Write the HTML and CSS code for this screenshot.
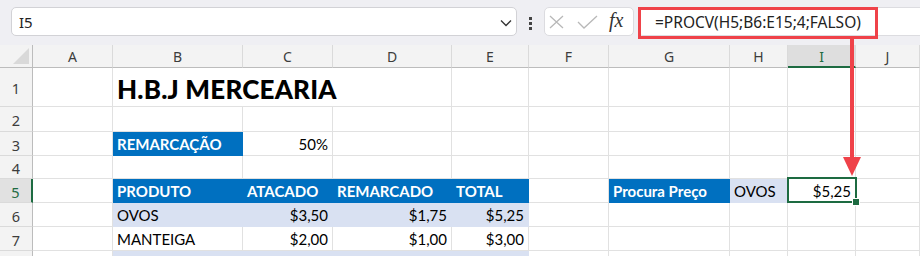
FILE: index.html
```html
<!DOCTYPE html>
<html>

<head>
	<title>H.B.J Mercearia</title>
	<link rel="stylesheet" href="styles.css">
</head>

<body>
	<div class="toolbar">
		<div class="name-box">
			<span>I5</span>
			<svg class="chevron" width="12" height="8" viewBox="0 0 12 8"><path d="M1 1.5 L6 6.5 L11 1.5" fill="none" stroke="#333" stroke-width="1.3"/></svg>
		</div>
		<div class="grip"><i></i><i></i><i></i></div>
		<div class="fx-buttons">
			<svg width="20" height="14" viewBox="0 0 20 14"><path d="M3 1 L16 13 M16 1 L3 13" stroke="#b8b8b8" stroke-width="1.3" fill="none"/></svg>
			<svg width="22" height="14" viewBox="0 0 22 14"><path d="M1 7 L7 13 L20 1" stroke="#b8b8b8" stroke-width="1.3" fill="none"/></svg>
			<span class="fx">fx</span>
		</div>
		<div class="formula">
			<span>=PROCV(H5;B6:E15;4;FALSO)</span>
			<div class="callout"></div>
		</div>
	</div>

	<div class="sheet">
		<!-- column headers -->
		<div class="corner"><svg width="16" height="16" viewBox="0 0 16 16"><path d="M16 0 L16 16 L0 16 Z" fill="#d9d9d9"/></svg></div>
		<div class="ch">A</div>
		<div class="ch">B</div>
		<div class="ch">C</div>
		<div class="ch">D</div>
		<div class="ch">E</div>
		<div class="ch">F</div>
		<div class="ch">G</div>
		<div class="ch">H</div>
		<div class="ch active">I</div>
		<div class="ch">J</div>

		<!-- row 1 -->
		<div class="rh">1</div>
		<div class="c"></div>
		<div class="c title">H.B.J MERCEARIA</div>
		<div class="c"></div>
		<div class="c"></div>
		<div class="c"></div>
		<div class="c"></div>
		<div class="c"></div>
		<div class="c"></div>

		<!-- row 2 -->
		<div class="rh">2</div>
		<div class="c"></div>
		<div class="c"></div>
		<div class="c"></div>
		<div class="c"></div>
		<div class="c"></div>
		<div class="c"></div>
		<div class="c"></div>
		<div class="c"></div>
		<div class="c"></div>
		<div class="c"></div>

		<!-- row 3 -->
		<div class="rh">3</div>
		<div class="c"></div>
		<div class="c hd">REMARCAÇÃO</div>
		<div class="c num">50%</div>
		<div class="c"></div>
		<div class="c"></div>
		<div class="c"></div>
		<div class="c"></div>
		<div class="c"></div>
		<div class="c"></div>
		<div class="c"></div>

		<!-- row 4 -->
		<div class="rh">4</div>
		<div class="c"></div>
		<div class="c"></div>
		<div class="c"></div>
		<div class="c"></div>
		<div class="c"></div>
		<div class="c"></div>
		<div class="c"></div>
		<div class="c"></div>
		<div class="c"></div>
		<div class="c"></div>

		<!-- row 5 -->
		<div class="rh active">5</div>
		<div class="c"></div>
		<div class="c hd">PRODUTO</div>
		<div class="c hd">ATACADO</div>
		<div class="c hd">REMARCADO</div>
		<div class="c hd">TOTAL</div>
		<div class="c"></div>
		<div class="c hd">Procura Preço</div>
		<div class="c lt">OVOS</div>
		<div class="c num selected">$5,25</div>
		<div class="c"></div>

		<!-- row 6 -->
		<div class="rh">6</div>
		<div class="c"></div>
		<div class="c lt">OVOS</div>
		<div class="c lt num">$3,50</div>
		<div class="c lt num">$1,75</div>
		<div class="c lt num">$5,25</div>
		<div class="c"></div>
		<div class="c"></div>
		<div class="c"></div>
		<div class="c"></div>
		<div class="c"></div>

		<!-- row 7 -->
		<div class="rh">7</div>
		<div class="c"></div>
		<div class="c">MANTEIGA</div>
		<div class="c num">$2,00</div>
		<div class="c num">$1,00</div>
		<div class="c num">$3,00</div>
		<div class="c"></div>
		<div class="c"></div>
		<div class="c"></div>
		<div class="c"></div>
		<div class="c"></div>

		<!-- row 8 (only its top edge is visible) -->
		<div class="rh"></div>
		<div class="c"></div>
		<div class="c lt"></div>
		<div class="c lt"></div>
		<div class="c lt"></div>
		<div class="c lt"></div>
		<div class="c"></div>
		<div class="c"></div>
		<div class="c"></div>
		<div class="c"></div>
		<div class="c"></div>
	</div>

	<!-- annotation arrow from the formula to I5 -->
	<svg class="arrow" width="920" height="256" viewBox="0 0 920 256">
		<path d="M852 38 L852 160" stroke="#ef4249" stroke-width="4"/>
		<path d="M843 157 L861 157 L852 176 Z" fill="#ef4249"/>
	</svg>
</body>

</html>
```

FILE: styles.css
```css
body {
	margin: 0;
	width: 920px;
	height: 256px;
	overflow: hidden;
	position: relative;
	background-color: #ffffff;
	font-family: "Lato", "Liberation Sans", sans-serif;
}

.toolbar {
	display: flex;
	align-items: flex-start;
	height: 45px;
	box-sizing: border-box;
	padding: 7px 0 0 11px;
	background-color: #efeff3;
	font-family: "Noto Sans", "Open Sans", sans-serif;
}

.name-box {
	display: flex;
	align-items: center;
	justify-content: space-between;
	width: 506px;
	height: 29px;
	box-sizing: border-box;
	padding: 0 4px 0 7px;
	background-color: white;
	border: 1px solid #d2d2d6;
	border-radius: 5px;
	font-size: 15px;
	color: #222;
}

.chevron {
	margin-top: 2px;
}

.grip {
	display: flex;
	flex-direction: column;
	gap: 2px;
	width: 27px;
	align-items: center;
	padding-top: 10px;
}

.grip i {
	display: block;
	width: 3px;
	height: 3px;
	background-color: #444;
}

.fx-buttons {
	display: flex;
	align-items: center;
	gap: 10px;
	width: 90px;
	height: 29px;
	box-sizing: border-box;
	padding-left: 2px;
	background-color: white;
	border: 1px solid #dcdce0;
	border-radius: 5px;
}

.fx {
	font-family: "Liberation Serif", serif;
	font-style: italic;
	font-size: 20px;
	color: #333;
	margin-top: -2px;
}

.formula {
	position: relative;
	flex: 1;
	height: 29px;
	margin-left: 4px;
	box-sizing: border-box;
	padding: 3px 0 0 16px;
	background-color: white;
	border: 1px solid #dcdce0;
	border-right: none;
	border-radius: 5px 0 0 5px;
	font-size: 15.5px;
	color: #222;
}

.callout {
	position: absolute;
	left: -1px;
	top: -1px;
	width: 240px;
	height: 32px;
	box-sizing: border-box;
	border: 3px solid #ef4249;
}

.sheet {
	display: grid;
	grid-template-columns: 33px 80px 130px 90px 119px 77px 80px 121px 58px 68px 64px;
	grid-template-rows: 23px 39px 25px 24px 23px 24px 24px 24px 24px;
}

.corner,
.ch {
	background-color: #f3f3f3;
	border-right: 1px solid #dadada;
	border-bottom: 1px solid #bcbcbc;
	box-sizing: border-box;
}

.corner {
	display: flex;
	justify-content: flex-end;
	align-items: flex-end;
	padding: 0 3px 3px 0;
	border-right-color: #bcbcbc;
}

.ch {
	display: flex;
	align-items: center;
	justify-content: center;
	font-family: "Noto Sans", "Open Sans", sans-serif;
	font-size: 14px;
	color: #3c3c3c;
	padding-top: 1px;
}

.ch.active {
	background-color: #dedede;
	border-bottom: 2px solid #1d6b41;
	color: #1d6b41;
}

.rh {
	display: flex;
	align-items: center;
	justify-content: center;
	background-color: #f3f3f3;
	border-right: 1px solid #bcbcbc;
	border-bottom: 1px solid #dadada;
	box-sizing: border-box;
	font-family: "Noto Sans", "Open Sans", sans-serif;
	font-size: 14.5px;
	color: #3c3c3c;
	padding-top: 2px;
}

.rh.active {
	background-color: #e1e1e1;
	border-right: 2px solid #1d6b41;
	color: #1d6b41;
}

.c {
	display: flex;
	align-items: flex-end;
	box-sizing: border-box;
	padding: 0 4px 2px 4px;
	border-right: 1px solid #e1e1e1;
	border-bottom: 1px solid #e1e1e1;
	font-size: 15px;
	color: #000;
	white-space: nowrap;
}

.title {
	grid-column: span 3;
	align-items: center;
	padding: 3px 0 0 4px;
	font-size: 26px;
	font-weight: 900;
	letter-spacing: 0.2px;
}

.num {
	justify-content: flex-end;
}

.hd {
	background-color: #0070c0;
	border-color: #0070c0;
	color: white;
	font-weight: bold;
}

.lt {
	background-color: #d9e1f2;
	border-color: #d9e1f2;
}

.selected {
	position: relative;
}

.selected::after {
	content: "";
	position: absolute;
	left: -1px;
	top: -2px;
	right: -2px;
	bottom: -1px;
	border: 2px solid #1d6b41;
}

.selected::before {
	content: "";
	position: absolute;
	right: -5px;
	bottom: -4px;
	width: 6px;
	height: 6px;
	background-color: #1d6b41;
	border: 1px solid white;
	z-index: 1;
}

.arrow {
	position: absolute;
	left: 0;
	top: 0;
	pointer-events: none;
}
```
